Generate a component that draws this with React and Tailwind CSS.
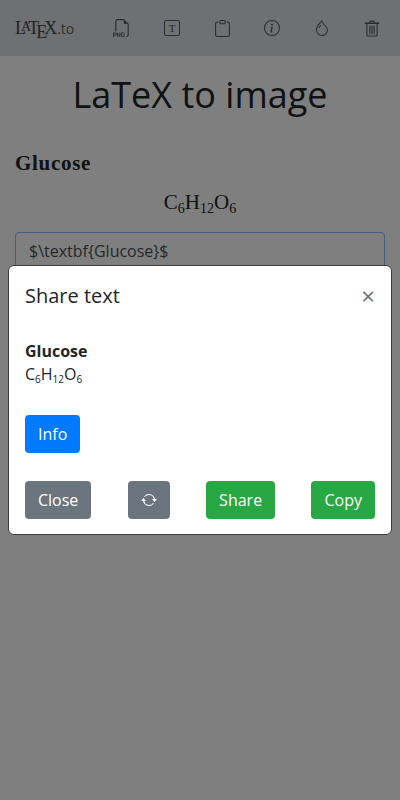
import { BsArrowRepeat, BsClipboard, BsDroplet, BsFiletypePng, BsInfoCircle } from 'react-icons/bs'

const openSans = { fontFamily: '"Open Sans", sans-serif' }
const serif = { fontFamily: '"Liberation Serif", serif' }

function NavIcon({ children }) {
  return <div className="flex h-[24px] w-[24px] items-center justify-center text-[#55585c]">{children}</div>
}

function TrashIcon() {
  return (
    <svg width="16" height="17" viewBox="0 0 16 17" fill="none" stroke="currentColor" strokeWidth="1.1" strokeLinecap="round" strokeLinejoin="round">
      <path d="M1.5 3.2h13" strokeWidth="1.4" />
      <path d="M5.8 3V1.6c0-.3.2-.5.5-.5h3.4c.3 0 .5.2.5.5V3" />
      <path d="M2.9 3.4v11.3c0 .8.5 1.3 1.3 1.3h7.6c.8 0 1.3-.5 1.3-1.3V3.4" />
      <path d="M5.9 6v7.6M8 6v7.6M10.1 6v7.6" />
    </svg>
  )
}

function Button({ className, children }) {
  return (
    <button className={`flex h-[38px] items-center justify-center rounded-[4px] px-[13px] text-[16px] text-white ${className}`}>
      {children}
    </button>
  )
}

export default function App() {
  return (
    <div className="relative min-h-[800px] bg-white text-[#212529]" style={openSans}>
      <nav className="flex h-[56px] items-center justify-between bg-[#dee0e2] pl-[15px] pr-[16px]">
        <div className="flex items-baseline text-[#45484c]" style={serif}>
          <span className="text-[18px] leading-none">L</span>
          <span className="-ml-[5px] -translate-y-[3px] text-[14px] leading-none">A</span>
          <span className="-ml-[3px] text-[18px] leading-none">T</span>
          <span className="-ml-[3px] translate-y-[4px] text-[18px] leading-none">E</span>
          <span className="-ml-[3px] text-[18px] leading-none">X</span>
          <span className="text-[14px] leading-none text-[#5f6266]" style={openSans}>.to</span>
        </div>
        <div className="flex items-center gap-[26px]">
          <NavIcon><BsFiletypePng size={18} /></NavIcon>
          <NavIcon>
            <div className="flex h-[16px] w-[16px] items-center justify-center rounded-[2px] border border-current text-[11px] leading-none" style={serif}>T</div>
          </NavIcon>
          <NavIcon><BsClipboard size={17} /></NavIcon>
          <NavIcon><BsInfoCircle size={16} /></NavIcon>
          <NavIcon><BsDroplet size={16} /></NavIcon>
          <NavIcon><TrashIcon /></NavIcon>
        </div>
      </nav>

      <main className="px-[15px]">
        <h1 className="mt-[11px] text-center text-[36px] leading-[56px]">LaTeX to image</h1>
        <p className="mt-[26px] text-[21px] font-bold leading-[28px] tracking-[0.7px]" style={serif}>Glucose</p>
        <p className="mt-[11px] text-center text-[21px] leading-[28px]" style={serif}>
          C<sub className="text-[14px]">6</sub>H<sub className="text-[14px]">12</sub>O<sub className="text-[14px]">6</sub>
        </p>
        <div className="mt-[16px] h-[100px] rounded-[4px] border border-[#80bdff] px-[13px] py-[6px] text-[16px] text-[#495057]">
          {'$\\textbf{Glucose}$'}
        </div>
      </main>

      <div className="fixed inset-0 bg-black/50" />

      <div className="fixed inset-0 flex items-center justify-center">
        <div className="w-[384px] rounded-[6px] border border-[#3c3c3c] bg-white">
          <div className="flex items-center justify-between px-[16px] pt-[15px] pb-[13px]">
            <h5 className="text-[20px] leading-[30px]">Share text</h5>
            <span className="text-[24px] leading-none text-[#6f7276]">×</span>
          </div>
          <div className="px-[16px] pt-[15px]">
            <p className="text-[16px] font-bold leading-[24px]">Glucose</p>
            <p className="-mt-[1px] text-[16px] leading-[24px]">
              C<sub className="text-[10px]">6</sub>H<sub className="text-[10px]">12</sub>O<sub className="text-[10px]">6</sub>
            </p>
            <Button className="mt-[29px] bg-[#007bff]">Info</Button>
          </div>
          <div className="mt-[28px] flex justify-between px-[16px] pb-[15px]">
            <Button className="bg-[#6c757d]">Close</Button>
            <Button className="w-[42px] bg-[#6c757d]"><BsArrowRepeat size={16} /></Button>
            <Button className="bg-[#28a745]">Share</Button>
            <Button className="bg-[#28a745]">Copy</Button>
          </div>
        </div>
      </div>
    </div>
  )
}
